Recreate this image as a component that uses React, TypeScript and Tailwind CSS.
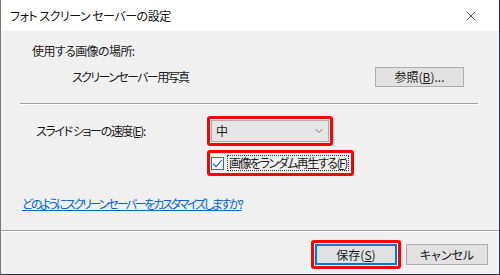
import React from 'react';
import { X, ChevronDown } from 'lucide-react';

// Photo screen saver settings dialog (Windows 10 style)

const font = "font-['Noto_Sans_CJK_JP','Noto_Sans',sans-serif] [font-feature-settings:'palt']";

function Highlight({ children, className = '' }: { children: React.ReactNode; className?: string }) {
  return (
    <div className={`border-[3px] border-[#ff0000] rounded-[3px] ${className}`}>{children}</div>
  );
}

function Button({ label, primary = false }: { label: React.ReactNode; primary?: boolean }) {
  return (
    <button
      type="button"
      className={`w-[82px] h-[21px] flex items-center justify-center text-[12px] text-[#1a1a1a] bg-[#e1e1e1] ${
        primary ? 'border-2 border-[#0078d7]' : 'border border-[#adadad]'
      }`}
    >
      {label}
    </button>
  );
}

export default function App() {
  return (
    <div className={`w-[500px] h-[275px] bg-[#f0f0f0] flex flex-col border-l border-[#7a7a7a] border-r border-b border-r-[#243649] border-b-[#243649] ${font}`}>
      {/* Title bar */}
      <div className="h-[31px] bg-white flex items-center pl-[9px] pr-[20px] shrink-0">
        <span className="text-[12px] tracking-[-0.5px] text-[#111]">フォト スクリーン セーバーの設定</span>
        <X className="ml-auto h-[16px] w-[16px] text-[#222]" strokeWidth={1.2} />
      </div>

      {/* Picture location */}
      <div className="pl-[31px] pr-[35px] pt-[12px]">
        <div className="text-[12px] leading-[16px] tracking-[-0.6px] text-[#1a1a1a]">使用する画像の場所:</div>
        <div className="flex items-center mt-[8px]">
          <span className="ml-[40px] text-[12px] tracking-[-1.6px] text-[#1a1a1a]">スクリーンセーバー用写真</span>
          <button
            type="button"
            className="ml-auto w-[89px] h-[20px] flex items-center justify-center text-[12px] text-[#1a1a1a] bg-[#e1e1e1] border border-[#adadad]"
          >
            参照(<span className="underline">B</span>)...
          </button>
        </div>
      </div>

      <div className="ml-[19px] mr-[21px] mt-[16px] border-t border-[#a0a0a0] border-b border-b-white" />

      {/* Slideshow speed */}
      <div className="flex items-center mt-[11px]">
        <span className="ml-[35px] w-[171px] text-[12px] tracking-[-1.4px] text-[#1a1a1a]">
          スライド ショーの速度(<span className="underline">E</span>):
        </span>
        <Highlight className="w-[126px] h-[30px] p-px">
          <div className="h-full bg-[#e5e5e5] border border-[#adadad] flex items-center pl-[4px] pr-[3px]">
            <span className="text-[12px] text-[#1a1a1a]">中</span>
            <ChevronDown className="ml-auto h-[12px] w-[12px] text-[#444]" strokeWidth={1.4} />
          </div>
        </Highlight>
      </div>

      {/* Shuffle checkbox */}
      <div className="flex mt-[4px] ml-[206px]">
        <Highlight className="h-[26px] flex items-center pl-[1px] pr-[2px]">
          <span className="w-[13px] h-[13px] border border-[#1e73cf] bg-white flex items-center justify-center">
            <svg viewBox="0 0 11 11" className="w-[11px] h-[11px]">
              <path d="M1 5.6 L4 8.8 L10 1.8" fill="none" stroke="#1e73cf" strokeWidth="1.3" />
            </svg>
          </span>
          <span className="ml-[3px] px-[1px] leading-[14px] border border-dotted border-[#333] text-[12px] tracking-[-1.5px] text-[#1a1a1a]">
            画像をランダム再生する(<span className="underline">F</span>)
          </span>
        </Highlight>
      </div>

      {/* Help link */}
      <div className="ml-[21px] mt-[14px]">
        <span className="text-[12px] tracking-[-2.3px] text-[#0066cc] underline">どのようにスクリーン セーバーをカスタマイズしますか?</span>
      </div>

      <div className="mt-[16px] border-t border-[#a0a0a0] border-b border-b-white" />

      {/* Footer buttons */}
      <div className="flex items-center justify-end gap-[5px] pr-[11px] mt-[8px]">
        <Highlight className="p-px">
          <Button primary label={<>保存(<span className="underline">S</span>)</>} />
        </Highlight>
        <Button label="キャンセル" />
      </div>
    </div>
  );
}
